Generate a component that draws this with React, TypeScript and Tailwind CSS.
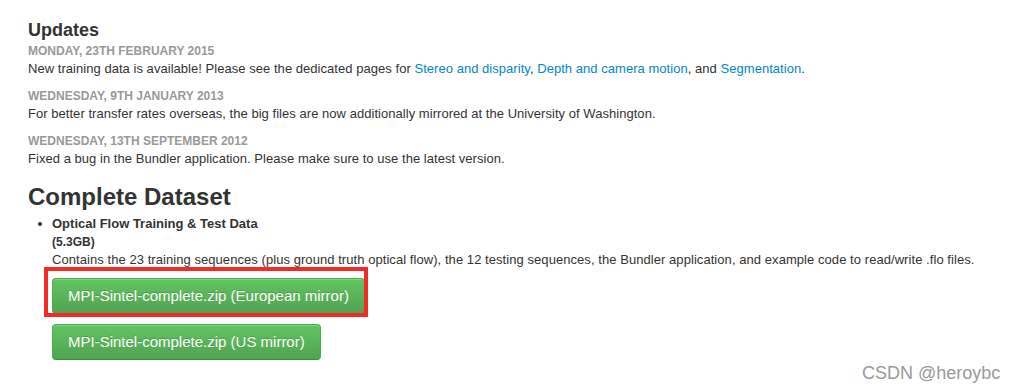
import React from "react";

const font = { fontFamily: '"Liberation Sans", Arial, Helvetica, sans-serif' };

function Update({ date, children }: { date: string; children: React.ReactNode }) {
  return (
    <div className="mb-[10px]">
      <div className="text-[12px] leading-[17px] font-bold uppercase text-[#999999]">{date}</div>
      <div className="text-[13px] leading-[18px] tracking-[0.04px] text-[#333333]">{children}</div>
    </div>
  );
}

function GreenButton({ children }: { children: React.ReactNode }) {
  return (
    <a className="inline-block self-start rounded-[4px] border border-[#4cae4c] border-b-[#3d8b3d] bg-gradient-to-b from-[#62c462] to-[#51a351] px-[15px] py-[7px] text-[15px] leading-[20px] text-white [text-shadow:0_-1px_0_rgba(0,0,0,0.15)] shadow-[inset_0_1px_0_rgba(255,255,255,0.2)]">
      {children}
    </a>
  );
}

export default function App() {
  return (
    <div className="relative h-[392px] w-[1014px] overflow-hidden bg-white" style={font}>
      <div className="flex flex-col pl-[28px] pt-[20px]">
        <h4 className="mb-[3px] text-[18px] leading-[20px] font-bold text-[#333333]">Updates</h4>
        <Update date="Monday, 23th February 2015">
          New training data is available! Please see the dedicated pages for{" "}
          <a className="text-[#0088cc]">Stereo and disparity</a>,{" "}
          <a className="text-[#0088cc]">Depth and camera motion</a>, and{" "}
          <a className="text-[#0088cc]">Segmentation</a>.
        </Update>
        <Update date="Wednesday, 9th January 2013">
          For better transfer rates overseas, the big files are now additionally mirrored at the University of Washington.
        </Update>
        <Update date="Wednesday, 13th September 2012">
          Fixed a bug in the Bundler application. Please make sure to use the latest version.
        </Update>
        <h3 className="mt-[5px] text-[24px] leading-[28px] font-bold text-[#333333]">Complete Dataset</h3>
        <div className="mt-[4px] flex">
          <div className="flex w-[24px] justify-center pt-[7px]">
            <span className="block h-[4px] w-[4px] rounded-full bg-[#333333]" />
          </div>
          <div className="flex flex-col">
            <div className="text-[13px] leading-[18px] font-bold text-[#333333]">Optical Flow Training &amp; Test Data</div>
            <div className="text-[12px] leading-[18px] font-bold text-[#333333]">(5.3GB)</div>
            <div className="text-[13px] leading-[18px] tracking-[0.06px] text-[#333333]">
              Contains the 23 training sequences (plus ground truth optical flow), the 12 testing sequences, the Bundler application, and example code to read/write .flo files.
            </div>
            <div className="mt-[9px] flex flex-col gap-[10px]">
              <GreenButton>MPI-Sintel-complete.zip (European mirror)</GreenButton>
              <GreenButton>MPI-Sintel-complete.zip (US mirror)</GreenButton>
            </div>
          </div>
        </div>
      </div>
      <div className="pointer-events-none absolute left-[44px] top-[267px] h-[50px] w-[324px] border-[4px] border-[#f22b23]" />
      <div className="absolute left-[862px] top-[362px] text-[18px] leading-[22px] text-[#9a9a9a]">CSDN @heroybc</div>
    </div>
  );
}
